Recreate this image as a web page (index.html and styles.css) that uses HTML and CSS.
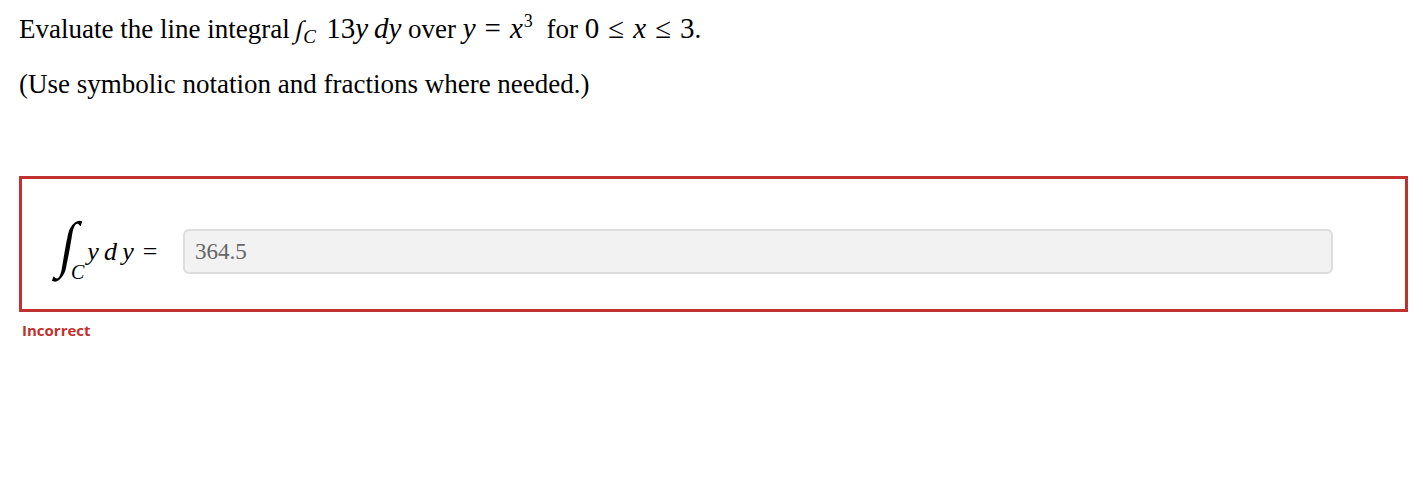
FILE: index.html
```html
<!DOCTYPE html>
<html lang="en">
<head>
    <meta charset="UTF-8">
    <title>Line Integral</title>
    <link rel="stylesheet" href="styles.css">
</head>
<body>
    <div class="question">
        <p class="prompt">Evaluate the line integral <span class="math"><span class="int-small">&int;</span><sub class="sub">C</sub> 13<i>y</i>&thinsp;<i>dy</i></span> over <span class="math"><i>y</i><span class="rel">=</span><i>x</i><sup class="sup">3</sup></span> for <span class="math">0<span class="rel">&le;</span><i>x</i><span class="rel">&le;</span>3</span>.</p>
        <p class="prompt">(Use symbolic notation and fractions where needed.)</p>
    </div>

    <div class="answer-box">
        <div class="answer-label">
            <span class="int-big">&int;</span><span class="sub-big">C</span>
            <span class="expr"><i>y</i>&thinsp;<i>d</i>&thinsp;<i>y</i><span class="rel">=</span></span>
        </div>
        <input type="text" class="answer-input" value="364.5" readonly>
    </div>
    <div class="feedback">Incorrect</div>
</body>
</html>
```

FILE: styles.css
```css
body {
    margin: 0;
    padding: 0;
    background-color: #ffffff;
    font-family: "Liberation Serif", "Times New Roman", serif;
    color: #000;
}

.question {
    padding: 13px 19px 0;
}

.prompt {
    font-size: 27px;
    margin: 0 0 24px;
    line-height: 30px;
}

.math {
    font-size: 29px;
}

.math i {
    font-style: italic;
}

.rel {
    margin: 0 9px;
}

.int-small {
    display: inline-block;
    font-size: 25px;
    transform: skewX(-12deg);
}

.sub {
    font-style: italic;
    font-size: 19px;
    vertical-align: -5px;
    line-height: 0;
    margin-right: 3px;
}

.sup {
    font-size: 18px;
    vertical-align: 11px;
    line-height: 0;
    margin: 0 7px 0 1px;
}

.answer-box {
    margin: 77px 15px 0 19px;
    height: 130px;
    box-sizing: content-box;
    border: 3px solid #c0312f;
    display: flex;
    align-items: flex-start;
    padding: 0 0 0 38px;
}

.answer-label {
    display: flex;
    align-items: flex-end;
    width: 123px;
    margin-top: 32px;
    font-size: 26px;
}

.int-big {
    display: inline-block;
    font-size: 62px;
    line-height: 66px;
    transform: skewX(-10deg) scaleX(0.85);
}

.sub-big {
    font-style: italic;
    font-size: 20px;
    line-height: 20px;
    margin-left: -6px;
    margin-bottom: -5px;
}

.expr {
    margin-left: 3px;
    margin-bottom: 10px;
    line-height: 30px;
}

.expr .rel {
    margin: 0 0 0 9px;
}

.answer-input {
    width: 1150px;
    height: 45px;
    margin-top: 50px;
    box-sizing: border-box;
    border: 2px solid #dddddd;
    border-radius: 6px;
    background-color: #f2f2f2;
    font-family: "Liberation Serif", "Times New Roman", serif;
    font-size: 23px;
    color: #666;
    padding: 0 10px;
    outline: none;
}

.feedback {
    margin: 8px 0 0 22px;
    font-family: "Open Sans", sans-serif;
    font-weight: 700;
    font-size: 15px;
    color: #c0312f;
}
```
